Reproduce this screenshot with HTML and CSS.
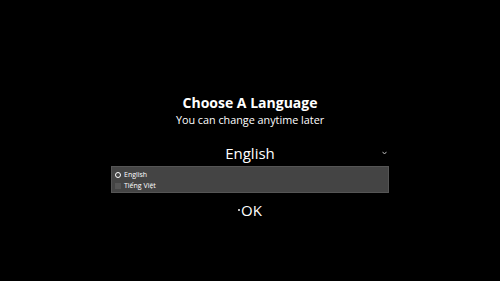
FILE: index.html
```html
<!DOCTYPE html>
<html lang="en">
<head>
  <meta charset="UTF-8" />
  <title>Choose A Language</title>
  <link rel="stylesheet" href="styles.css">
</head>
<body>
  <div class="screen">
    <h1 class="title">Choose A Language</h1>
    <p class="subtitle">You can change anytime later</p>

    <div class="select">
      <span class="select-value">English</span>
      <svg class="chevron" width="5" height="4" viewBox="0 0 5 4">
        <path d="M0.5 0.8 L2.5 3 L4.5 0.8" fill="none" stroke="#bbb" stroke-width="1"/>
      </svg>
    </div>

    <ul class="options">
      <li class="option selected"><span class="mark"></span>English</li>
      <li class="option"><span class="mark"></span>Tiếng Việt</li>
    </ul>

    <div class="ok"><span class="dot"></span>OK</div>
  </div>
</body>
</html>
```

FILE: styles.css
```css
html, body {
  margin: 0;
  background: #000;
}

body {
  font-family: "Open Sans", "Liberation Sans", sans-serif;
  color: #fff;
}

.screen {
  width: 500px;
  height: 281px;
  display: flex;
  flex-direction: column;
  align-items: center;
  padding-top: 93px;
  box-sizing: border-box;
}

.title {
  margin: 0;
  font-size: 14px;
  font-weight: 700;
  line-height: 20px;
}

.subtitle {
  margin: 0;
  font-size: 10.8px;
  line-height: 14px;
}

/* Select */
.select {
  position: relative;
  width: 278px;
  height: 26px;
  margin-top: 13px;
  text-align: center;
}
.select-value {
  font-size: 15px;
  line-height: 26px;
}
.chevron {
  position: absolute;
  right: 2px;
  top: 11px;
}

/* Options */
.options {
  list-style: none;
  margin: 0;
  padding: 2px 0;
  width: 278px;
  height: 27px;
  box-sizing: border-box;
  background: #444;
  border: 1px solid #555;
}
.option {
  display: flex;
  align-items: center;
  height: 11px;
  padding-left: 3px;
  font-size: 7px;
  color: #fff;
}
.mark {
  width: 6px;
  height: 6px;
  margin-right: 3px;
  background: #555;
}
.option.selected .mark {
  box-sizing: border-box;
  border: 1.2px solid #fff;
  border-radius: 50%;
  background: transparent;
}

/* OK */
.ok {
  display: flex;
  align-items: center;
  margin-top: 7px;
  font-size: 15px;
  line-height: 20px;
}
.dot {
  width: 2px;
  height: 2px;
  margin-right: 1px;
  background: #bbb;
}
```
